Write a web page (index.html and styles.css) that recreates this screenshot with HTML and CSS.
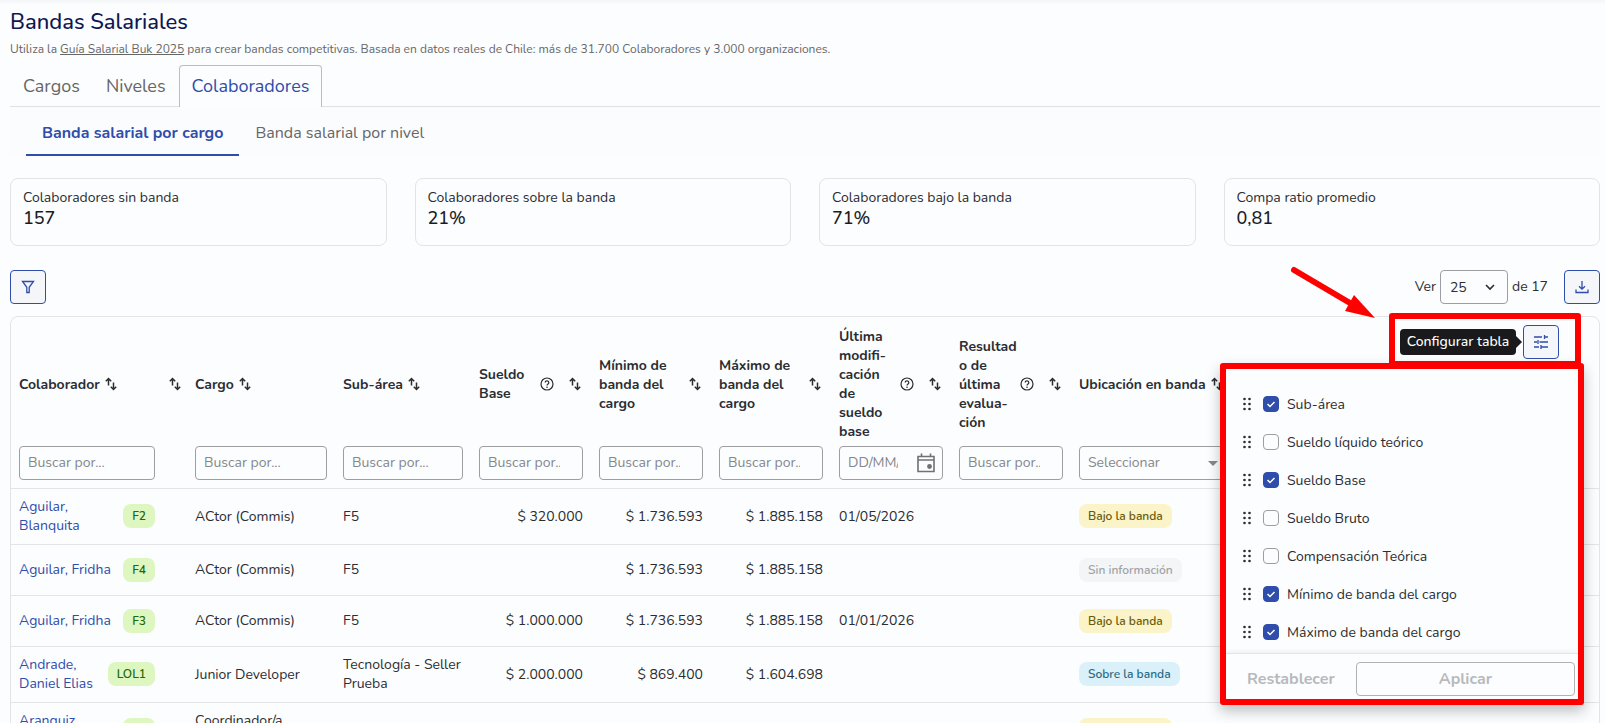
FILE: index.html
```html
<!DOCTYPE html>
<html lang="es">
<head>
  <meta charset="UTF-8" />
  <meta name="viewport" content="width=device-width, initial-scale=1" />
  <title>Bandas Salariales</title>
  <link rel="stylesheet" href="styles.css">
</head>
<body>

<svg class="sprite" aria-hidden="true">
  <symbol id="sort" viewBox="0 0 16 16">
    <path d="M5.500 9.500V2.500M2.800 5.200 5.500 2.500 8.200 5.200M10.500 6.500v7M7.800 10.800 10.500 13.500 13.200 10.800" fill="none" stroke="currentColor" stroke-width="1.500"/>
  </symbol>
  <symbol id="help" viewBox="0 0 16 16">
    <circle cx="8" cy="8" r="6" fill="none" stroke="currentColor" stroke-width="1.200"/>
    <path d="M6.200 6.600a1.800 1.800 0 1 1 2.800 1.500c-.7.5-1 .8-1 1.500" fill="none" stroke="currentColor" stroke-width="1.200"/>
    <circle cx="8" cy="11.200" r=".8" fill="currentColor"/>
  </symbol>
  <symbol id="grip" viewBox="0 0 10 14">
    <g fill="currentColor">
      <circle cx="2.500" cy="2" r="1.300"/><circle cx="7.500" cy="2" r="1.300"/>
      <circle cx="2.500" cy="7" r="1.300"/><circle cx="7.500" cy="7" r="1.300"/>
      <circle cx="2.500" cy="12" r="1.300"/><circle cx="7.500" cy="12" r="1.300"/>
    </g>
  </symbol>
</svg>

<header class="page-header">
  <h1>Bandas Salariales</h1>
  <p>Utiliza la <a href="#guia">Guía Salarial Buk 2025</a> para crear bandas competitivas. Basada en datos reales de Chile: más de 31.700 Colaboradores y 3.000 organizaciones.</p>
</header>

<nav class="tabs">
  <a href="#cargos">Cargos</a>
  <a href="#niveles">Niveles</a>
  <a href="#colaboradores" class="active">Colaboradores</a>
</nav>

<nav class="subtabs">
  <a href="#por-cargo" class="active">Banda salarial por cargo</a>
  <a href="#por-nivel">Banda salarial por nivel</a>
</nav>

<section class="cards">
  <div class="card"><span>Colaboradores sin banda</span><strong>157</strong></div>
  <div class="card"><span>Colaboradores sobre la banda</span><strong>21%</strong></div>
  <div class="card"><span>Colaboradores bajo la banda</span><strong>71%</strong></div>
  <div class="card"><span>Compa ratio promedio</span><strong>0,81</strong></div>
</section>

<div class="toolbar">
  <button class="icon-btn" aria-label="Filtrar">
    <svg width="14" height="14" viewBox="0 0 14 14"><path d="M1.500 1.500h11L8.200 7.300v5.200H5.800V7.300z" fill="none" stroke="currentColor" stroke-width="1.300"/></svg>
  </button>
  <div class="pager">
    <label for="page-size">Ver</label>
    <div class="select-box">
      <select id="page-size"><option>25</option><option>50</option></select>
      <svg width="10" height="8" viewBox="0 0 10 8"><path d="M1 2 5 6 9 2" fill="none" stroke="currentColor" stroke-width="1.600"/></svg>
    </div>
    <span>de 17</span>
  </div>
  <button class="icon-btn" aria-label="Descargar">
    <svg width="14" height="14" viewBox="0 0 14 14"><path d="M7 1v8M4 6.200l3 3 3-3M1 9.500v3h12v-3" fill="none" stroke="currentColor" stroke-width="1.300"/></svg>
  </button>
</div>

<main class="table-wrap">
  <table>
    <colgroup>
      <col class="c-name"><col class="c-sort"><col class="c-job"><col class="c-area">
      <col class="c-num"><col class="c-num"><col class="c-num"><col class="c-num"><col class="c-num">
      <col class="c-band"><col>
    </colgroup>
    <thead>
      <tr>
        <th><div class="th">Colaborador <svg><use href="#sort"/></svg></div></th>
        <th class="only-sort"><div class="th"><svg><use href="#sort"/></svg></div></th>
        <th><div class="th">Cargo <svg><use href="#sort"/></svg></div></th>
        <th><div class="th">Sub-área <svg><use href="#sort"/></svg></div></th>
        <th><div class="th wide"><span>Sueldo Base</span><svg><use href="#help"/></svg><svg><use href="#sort"/></svg></div></th>
        <th><div class="th wide"><span>Mínimo de banda del cargo</span><svg><use href="#sort"/></svg></div></th>
        <th><div class="th wide"><span>Máximo de banda del cargo</span><svg><use href="#sort"/></svg></div></th>
        <th><div class="th wide"><span>Última<br>modifi-<br>cación<br>de<br>sueldo<br>base</span><svg><use href="#help"/></svg><svg><use href="#sort"/></svg></div></th>
        <th><div class="th wide"><span>Resultad<br>o de<br>última<br>evalua-<br>ción</span><svg><use href="#help"/></svg><svg><use href="#sort"/></svg></div></th>
        <th><div class="th">Ubicación en banda <svg><use href="#sort"/></svg></div></th>
        <th></th>
      </tr>
      <tr class="filters">
        <td><input type="text" placeholder="Buscar por..." aria-label="Buscar por colaborador"></td>
        <td></td>
        <td><input type="text" placeholder="Buscar por..." aria-label="Buscar por cargo"></td>
        <td><input type="text" placeholder="Buscar por..." aria-label="Buscar por sub-área"></td>
        <td><input type="text" placeholder="Buscar por..." aria-label="Buscar por sueldo base"></td>
        <td><input type="text" placeholder="Buscar por..." aria-label="Buscar por mínimo de banda"></td>
        <td><input type="text" placeholder="Buscar por..." aria-label="Buscar por máximo de banda"></td>
        <td>
          <div class="date-box">
            <input type="text" placeholder="DD/MM/AAAA" aria-label="Última modificación">
            <svg width="20" height="22" viewBox="0 0 20 22"><path d="M2 4.500h16v15H2zM2 8h16M5.500 1.500v3M14.500 1.500v3" fill="none" stroke="currentColor" stroke-width="1.600"/><circle cx="13.500" cy="14.500" r="2.400" fill="currentColor"/></svg>
          </div>
        </td>
        <td><input type="text" placeholder="Buscar por..." aria-label="Buscar por resultado"></td>
        <td>
          <div class="select-box band-select">
            <select aria-label="Ubicación en banda"><option>Seleccionar</option></select>
            <svg width="10" height="6" viewBox="0 0 10 6"><path d="M0 0h10L5 5z" fill="currentColor"/></svg>
          </div>
        </td>
        <td></td>
      </tr>
    </thead>
    <tbody>
      <tr>
        <td><div class="person"><a href="#p1">Aguilar, Blanquita</a><span class="badge green">F2</span></div></td><td></td>
        <td>ACtor (Commis)</td><td>F5</td>
        <td class="num">$ 320.000</td><td class="num">$ 1.736.593</td><td class="num">$ 1.885.158</td>
        <td>01/05/2026</td><td></td><td><span class="badge yellow">Bajo la banda</span></td><td></td>
      </tr>
      <tr>
        <td><div class="person"><a href="#p2">Aguilar, Fridha</a><span class="badge green">F4</span></div></td><td></td>
        <td>ACtor (Commis)</td><td>F5</td>
        <td></td><td class="num">$ 1.736.593</td><td class="num">$ 1.885.158</td>
        <td></td><td></td><td><span class="badge gray">Sin información</span></td><td></td>
      </tr>
      <tr>
        <td><div class="person"><a href="#p3">Aguilar, Fridha</a><span class="badge green">F3</span></div></td><td></td>
        <td>ACtor (Commis)</td><td>F5</td>
        <td class="num">$ 1.000.000</td><td class="num">$ 1.736.593</td><td class="num">$ 1.885.158</td>
        <td>01/01/2026</td><td></td><td><span class="badge yellow">Bajo la banda</span></td><td></td>
      </tr>
      <tr>
        <td><div class="person"><a href="#p4">Andrade, Daniel Elias</a><span class="badge green">LOL1</span></div></td><td></td>
        <td>Junior Developer</td><td>Tecnología - Seller Prueba</td>
        <td class="num">$ 2.000.000</td><td class="num">$ 869.400</td><td class="num">$ 1.604.698</td>
        <td></td><td></td><td><span class="badge blue">Sobre la banda</span></td><td></td>
      </tr>
      <tr>
        <td><div class="person"><a href="#p5">Aranguiz,<br>Daniela</a><span class="badge green">F2</span></div></td><td></td>
        <td>Coordinador/a<br>Comercial</td><td></td>
        <td></td><td></td><td></td>
        <td></td><td></td><td><span class="badge yellow">Bajo la banda</span></td><td></td>
      </tr>
    </tbody>
  </table>

  <svg class="arrow" width="90" height="56" viewBox="0 0 90 56">
    <path d="M6 6 62 39" stroke="#f00" stroke-width="6" stroke-linecap="round"/>
    <path d="M66 31 87 54 57 47z" fill="#f00"/>
  </svg>

  <div class="config">
    <div class="config-head">
      <span class="tooltip" role="tooltip" id="tip">Configurar tabla</span>
      <button class="icon-btn" aria-labelledby="tip">
        <svg width="16" height="16" viewBox="0 0 16 16"><path d="M1 3h8M11 3h4M11.500 1v4M1 8h3M5 6v4M6.500 8H15M1 13h5M8 11v4M8 13h7" fill="none" stroke="currentColor" stroke-width="1.300"/></svg>
      </button>
    </div>
    <form class="config-panel">
      <ul>
        <li><svg><use href="#grip"/></svg><label><input type="checkbox" checked> Sub-área</label></li>
        <li><svg><use href="#grip"/></svg><label><input type="checkbox"> Sueldo líquido teórico</label></li>
        <li><svg><use href="#grip"/></svg><label><input type="checkbox" checked> Sueldo Base</label></li>
        <li><svg><use href="#grip"/></svg><label><input type="checkbox"> Sueldo Bruto</label></li>
        <li><svg><use href="#grip"/></svg><label><input type="checkbox"> Compensación Teórica</label></li>
        <li><svg><use href="#grip"/></svg><label><input type="checkbox" checked> Mínimo de banda del cargo</label></li>
        <li><svg><use href="#grip"/></svg><label><input type="checkbox" checked> Máximo de banda del cargo</label></li>
      </ul>
      <footer>
        <button type="reset" class="reset" disabled>Restablecer</button>
        <button type="submit" class="apply" disabled>Aplicar</button>
      </footer>
    </form>
  </div>
</main>

</body>
</html>
```

FILE: styles.css
```css
* {
  box-sizing: border-box;
}

body {
  margin: 0;
  padding: 7px 5px 0 10px;
  background: #fcfdff linear-gradient(#f5f6f8, #fcfdff) no-repeat top / 100% 5px;
  color: #2b2d31;
  font-family: Nunito, Lato, "Open Sans", sans-serif;
  font-size: 14px;
  line-height: 19px;
}

a {
  color: #2f4daa;
  text-decoration: none;
}

button, input, select {
  font: inherit;
  color: inherit;
}

.sprite {
  display: none;
}

h1 {
  margin: 0;
  color: #0f1650;
  font-size: 22px;
  font-weight: 500;
  line-height: 30px;
}

.page-header p {
  margin: 4px 0 8px;
  color: #666;
  font-size: 12px;
  line-height: 16px;
}

.page-header a {
  color: inherit;
  text-decoration: underline;
}

/* tabs */
.tabs {
  display: flex;
  border-bottom: 1px solid #dfe1e5;
}

.tabs a {
  margin-bottom: -1px;
  padding: 0 12px;
  border: 1px solid transparent;
  border-bottom: none;
  border-radius: 4px 4px 0 0;
  color: #666;
  font-size: 18px;
  line-height: 41px;
}

.tabs .active {
  background: #fcfdff;
  border-color: #bbbdc2;
  color: #2f4daa;
}

.subtabs {
  display: flex;
  padding: 0 16px;
  background: #fbfcfe;
}

.subtabs a {
  padding: 6px 16px 0;
  border-bottom: 2px solid transparent;
  color: #666;
  font-size: 16px;
  line-height: 41px;
}

.subtabs .active {
  border-color: #2f4daa;
  color: #2f4daa;
  font-weight: bold;
}

/* summary */
.cards {
  display: grid;
  grid-template-columns: repeat(4, 1fr);
  gap: 28px;
  margin-top: 22px;
}

.card {
  display: flex;
  flex-direction: column;
  padding: 9px 12px 16px;
  border: 1px solid #e2e4e8;
  border-radius: 8px;
}

.card strong {
  color: #1b1c1f;
  font-size: 18px;
  font-weight: 500;
  line-height: 22px;
}

/* toolbar */
.toolbar {
  display: flex;
  align-items: center;
  margin: 24px 0 12px;
}

.icon-btn {
  display: flex;
  align-items: center;
  justify-content: center;
  width: 36px;
  height: 34px;
  padding: 0;
  border: 1px solid #2f4daa;
  border-radius: 4px;
  background: #f5f6f9;
  color: #2f4daa;
}

.pager {
  display: flex;
  align-items: center;
  gap: 4px;
  margin: 0 16px 0 auto;
}

.pager label,
.pager span {
  padding-bottom: 2px;
}

.select-box {
  position: relative;
  width: 68px;
}

.select-box select {
  appearance: none;
  width: 100%;
  height: 34px;
  padding: 0 9px;
  border: 1px solid #9c9ea2;
  border-radius: 4px;
  background: transparent;
}

.select-box svg {
  position: absolute;
  right: 13px;
  top: 13px;
  pointer-events: none;
}

/* table */
.table-wrap {
  position: relative;
  border: 1px solid #e2e4e8;
  border-radius: 8px;
}

table {
  width: 100%;
  border-collapse: collapse;
  table-layout: fixed;
}

.c-name { width: 152px; }
.c-sort { width: 24px; }
.c-job { width: 148px; }
.c-area { width: 136px; }
.c-num { width: 120px; }
.c-band { width: 160px; }

th {
  height: 126px;
  padding: 8px 8px 0;
  text-align: left;
  font-weight: bold;
}

th.only-sort {
  padding: 8px 4px 0;
}

.th {
  display: flex;
  align-items: center;
  gap: 3px;
  white-space: nowrap;
}

.th.wide {
  gap: 12px;
  white-space: normal;
}

.th.wide span {
  flex: 1;
  min-width: 0;
}

.th svg {
  flex: none;
  width: 16px;
  height: 16px;
}

td {
  height: 51px;
  padding: 8px 8px 9px;
  border-bottom: 1px solid #e2e4e8;
}

.filters td {
  padding: 3px 8px 8px;
  height: auto;
}

.filters input {
  display: block;
  width: 100%;
  height: 34px;
  padding: 0 22px 2px 8px;
  border: 1px solid #9c9ea2;
  border-radius: 4px;
  background: transparent;
}

.filters input::placeholder {
  color: #85878b;
  opacity: 1;
}

.filters .date-box {
  display: flex;
  align-items: center;
  padding-right: 6px;
  border: 1px solid #9c9ea2;
  border-radius: 4px;
  color: #6f7175;
}

.filters .date-box input {
  flex: 1;
  min-width: 0;
  height: 32px;
  margin-right: 18px;
  padding: 0 0 2px 8px;
  border: none;
}

.date-box svg {
  flex: none;
}

.band-select {
  width: 100%;
  color: #85878b;
}

.band-select select {
  padding: 0 8px 2px;
}

.band-select svg {
  right: 5px;
  top: 15px;
}

.num {
  text-align: right;
}

.person {
  display: flex;
  align-items: center;
  justify-content: space-between;
}

.badge {
  display: inline-block;
  padding: 0 9px;
  border-radius: 8px;
  font-size: 12px;
  font-weight: 600;
  line-height: 24px;
}

.green { background: #def6bf; color: #1e6b0a; }
.yellow { background: #faf4c8; color: #6b5a0a; }
.gray { background: #f4f5f7; color: #a0a2a6; }
.blue { background: #dbf1fa; color: #2a6a85; }

/* column settings */
.arrow {
  position: absolute;
  top: -53px;
  right: 221px;
}

.config {
  position: absolute;
  top: -4px;
  right: 15px;
  width: 364px;
}

.config-head {
  display: flex;
  align-items: center;
  gap: 7px;
  width: 192px;
  height: 50px;
  margin: 0 3px 0 auto;
  padding: 3px 16px 0 5px;
  border: 6px solid #f00;
  border-bottom-width: 2px;
  border-radius: 3px 3px 0 0;
  background: #fcfdff;
}

.tooltip {
  position: relative;
  flex: 1;
  border-radius: 4px;
  background: #1a1a1c;
  color: #fff;
  font-weight: 500;
  line-height: 26px;
  text-align: center;
}

.tooltip::after {
  content: "";
  position: absolute;
  left: 100%;
  top: 7px;
  border: 6px solid transparent;
  border-left-color: #1a1a1c;
  border-right: none;
}

.config-panel {
  border: 6px solid #f00;
  border-radius: 3px;
  background: #fcfdff;
  box-shadow: 0 6px 14px rgba(0, 0, 0, 0.25);
}

.config-panel ul {
  margin: 0;
  padding: 16px 16px 2px;
  list-style: none;
}

.config-panel li {
  display: flex;
  align-items: center;
  gap: 11px;
  height: 38px;
}

.config-panel li svg {
  width: 10px;
  height: 14px;
}

.config-panel label {
  display: flex;
  align-items: center;
  gap: 8px;
}

.config-panel input {
  appearance: none;
  width: 16px;
  height: 16px;
  margin: 0;
  border: 1px solid #9c9ea2;
  border-radius: 4px;
}

.config-panel input:checked {
  border-color: #2f4daa;
  background: #2f4daa url("data:image/svg+xml,%3Csvg xmlns='http://www.w3.org/2000/svg' viewBox='0 0 14 14'%3E%3Cpath d='M3.500 7l2.500 2.500 4.500-4.500' fill='none' stroke='white' stroke-width='1.500'/%3E%3C/svg%3E");
}

.config-panel footer {
  display: flex;
  align-items: center;
  gap: 21px;
  padding: 8px 3px 3px 21px;
  border-top: 1px solid #e2e4e8;
  box-shadow: 0 -2px 4px rgba(0, 0, 0, 0.05);
}

.config-panel button {
  height: 34px;
  background: none;
  color: #b7b9bc;
  font-size: 16px;
  font-weight: bold;
}

.reset {
  padding: 0;
  border: none;
}

.apply {
  flex: 1;
  border: 1px solid #b0b2b6;
  border-radius: 4px;
}
```
